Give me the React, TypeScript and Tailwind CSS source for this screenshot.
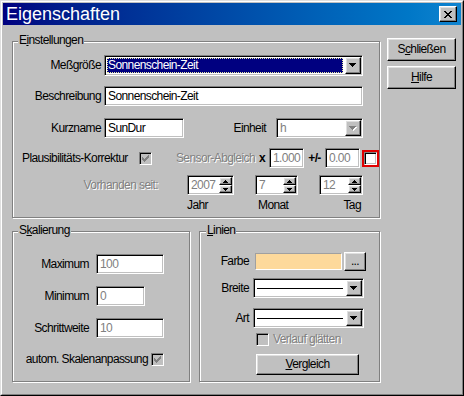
import React from "react";

const FONT = "font-['Liberation_Sans',Arial,sans-serif]";
const SUNKEN =
  "border border-t-[#808080] border-l-[#808080] border-r-white border-b-white shadow-[inset_1px_1px_0_#000,inset_-1px_-1px_0_#c0c0c0]";
const RAISED =
  "bg-[#c0c0c0] border border-t-white border-l-white border-r-black border-b-black shadow-[inset_-1px_-1px_0_#808080,inset_1px_1px_0_#dfdfdf]";
const DIS = "text-[#808080] [text-shadow:1px_1px_0_#fff]";

function DownArrow({ disabled }: { disabled?: boolean }) {
  const c = disabled ? "#808080" : "#000";
  return (
    <svg width="8" height="5" viewBox="0 0 8 5" shapeRendering="crispEdges">
      {disabled && (
        <g fill="#fff">
          <rect x="1" y="1" width="7" height="1" />
          <rect x="2" y="2" width="5" height="1" />
          <rect x="3" y="3" width="3" height="1" />
          <rect x="4" y="4" width="1" height="1" />
        </g>
      )}
      <g fill={c}>
        <rect x="0" y="0" width="7" height="1" />
        <rect x="1" y="1" width="5" height="1" />
        <rect x="2" y="2" width="3" height="1" />
        <rect x="3" y="3" width="1" height="1" />
      </g>
    </svg>
  );
}

function SmallArrow({ up }: { up?: boolean }) {
  return (
    <svg width="5" height="3" viewBox="0 0 5 3" shapeRendering="crispEdges">
      {up ? (
        <g fill="#000">
          <rect x="2" y="0" width="1" height="1" />
          <rect x="1" y="1" width="3" height="1" />
          <rect x="0" y="2" width="5" height="1" />
        </g>
      ) : (
        <g fill="#000">
          <rect x="0" y="0" width="5" height="1" />
          <rect x="1" y="1" width="3" height="1" />
          <rect x="2" y="2" width="1" height="1" />
        </g>
      )}
    </svg>
  );
}

function CheckMark({ color }: { color: string }) {
  const rows: [number, number][][] = [
    [[6, 1]],
    [[5, 2]],
    [[0, 1], [4, 3]],
    [[0, 2], [3, 3]],
    [[0, 5]],
    [[1, 3]],
    [[2, 1]],
  ];
  return (
    <svg width="7" height="7" viewBox="0 0 7 7" shapeRendering="crispEdges">
      {rows.map((r, y) =>
        r.map(([x, w], i) => <rect key={`${y}-${i}`} x={x} y={y} width={w} height={1} fill={color} />)
      )}
    </svg>
  );
}

function Checkbox({ checked, disabled, className = "" }: { checked?: boolean; disabled?: boolean; className?: string }) {
  return (
    <div
      className={`${SUNKEN} w-[13px] h-[13px] shrink-0 flex items-center justify-center ${
        disabled ? "bg-[#c0c0c0]" : "bg-white"
      } ${className}`}
    >
      {checked && <CheckMark color={disabled ? "#808080" : "#000"} />}
    </div>
  );
}

function Field({ className = "", gray, children }: { className?: string; gray?: boolean; children?: React.ReactNode }) {
  return (
    <div
      className={`${SUNKEN} bg-white h-[20px] shrink-0 flex items-center pl-[3px] whitespace-nowrap overflow-hidden ${
        gray ? "text-[#808080]" : ""
      } ${className}`}
    >
      {children}
    </div>
  );
}

function DropButton({ disabled }: { disabled?: boolean }) {
  return (
    <div className={`${RAISED} w-[16px] h-full shrink-0 flex items-center justify-center`}>
      <DownArrow disabled={disabled} />
    </div>
  );
}

function Spinner({ className = "", children }: { className?: string; children?: React.ReactNode }) {
  return (
    <div className={`${SUNKEN} bg-white p-px flex h-[20px] shrink-0 ${className}`}>
      <div className="flex-1 pl-[2px] text-[#808080] flex items-center">{children}</div>
      <div className="flex flex-col w-[13px]">
        <div className={`${RAISED} flex-1 flex items-center justify-center`}>
          <SmallArrow up />
        </div>
        <div className={`${RAISED} flex-1 flex items-center justify-center`}>
          <SmallArrow />
        </div>
      </div>
    </div>
  );
}

function Group({
  title,
  className = "",
  labelClass = "left-[5px]",
  children,
}: {
  title: React.ReactNode;
  className?: string;
  labelClass?: string;
  children?: React.ReactNode;
}) {
  return (
    <div className={`relative border border-[#808080] shadow-[inset_1px_1px_0_#fff,1px_1px_0_#fff] shrink-0 ${className}`}>
      <div className={`absolute -top-[9px] px-px bg-[#c0c0c0] ${labelClass}`}>{title}</div>
      {children}
    </div>
  );
}

function LineCombo({ className = "" }: { className?: string }) {
  return (
    <div className={`${SUNKEN} bg-white p-px flex h-[20px] shrink-0 ${className}`}>
      <div className="flex-1 flex items-center pl-[2px] pr-[3px]">
        <div className="h-px w-full bg-black" />
      </div>
      <DropButton />
    </div>
  );
}

export default function App() {
  return (
    <div
      className={`w-[464px] h-[396px] ${FONT} text-[12px] tracking-[-0.6px] leading-[15px] text-black bg-[#c0c0c0] border border-t-[#dfdfdf] border-l-[#dfdfdf] border-r-black border-b-black`}
    >
      <div className="h-full border border-t-white border-l-white border-r-[#808080] border-b-[#808080] p-px flex flex-col">
        {/* Title bar */}
        <div className="h-[22px] shrink-0 flex items-center bg-linear-to-r from-[#000080] to-[#1084d0] pl-[3px] pr-[4px]">
          <span className="flex-1 text-[18px] tracking-normal leading-none text-white">Eigenschaften</span>
          <div className={`${RAISED} w-[18px] h-[16px] flex items-center justify-center`}>
            <svg width="8" height="7" viewBox="0 0 8 7" shapeRendering="crispEdges">
              <g fill="#000">
                <rect x="0" y="0" width="2" height="1" />
                <rect x="6" y="0" width="2" height="1" />
                <rect x="1" y="1" width="2" height="1" />
                <rect x="5" y="1" width="2" height="1" />
                <rect x="2" y="2" width="4" height="1" />
                <rect x="3" y="3" width="2" height="1" />
                <rect x="2" y="4" width="4" height="1" />
                <rect x="1" y="5" width="2" height="1" />
                <rect x="5" y="5" width="2" height="1" />
                <rect x="0" y="6" width="2" height="1" />
                <rect x="6" y="6" width="2" height="1" />
              </g>
            </svg>
          </div>
        </div>

        {/* Body */}
        <div className="flex">
          <div className="ml-[9px] mt-[16px] w-[368px] flex flex-col">
            <Group
              className="w-[368px] h-[177px]"
              title={
                <>
                  E<u>i</u>nstellungen
                </>
              }
            >
              <div className="pt-[13px] flex flex-col">
                <div className="flex items-center h-[21px]">
                  <div className="w-[88px] text-right">Meßgröße</div>
                  <div className={`${SUNKEN} bg-white p-px flex ml-[3px] w-[259px] h-[21px]`}>
                    <div className="flex-1 m-px mr-[2px] bg-[#000080] text-white border border-dotted border-[#e8e8a0] flex items-center">
                      Sonnenschein-Zeit
                    </div>
                    <DropButton />
                  </div>
                </div>

                <div className="flex items-center h-[20px] mt-[10px]">
                  <div className="w-[88px] text-right">Beschreibung</div>
                  <Field className="ml-[3px] w-[259px]">Sonnenschein-Zeit</Field>
                </div>

                <div className="flex items-center h-[20px] mt-[12px]">
                  <div className="w-[88px] text-right">Kurzname</div>
                  <Field className="ml-[3px] w-[80px]">SunDur</Field>
                  <div className="w-[82px] text-right">Einheit</div>
                  <div className={`${SUNKEN} bg-white p-px flex ml-[10px] w-[87px] h-[20px]`}>
                    <div className="flex-1 pl-[2px] text-[#808080] flex items-center">h</div>
                    <DropButton disabled />
                  </div>
                </div>

                <div className="flex items-center h-[20px] mt-[10px]">
                  <div className="w-[126px] pl-[9px] whitespace-nowrap">Plausibilitäts-Korrektur</div>
                  <Checkbox checked disabled />
                  <div className={`w-[103px] text-right whitespace-nowrap ${DIS}`}>Sensor-Abgleich</div>
                  <div className="w-[14px] text-center font-bold">x</div>
                  <Field className="w-[35px]" gray>
                    1.000
                  </Field>
                  <div className="w-[21px] text-center font-bold">+/-</div>
                  <Field className="w-[35px]" gray>
                    0.00
                  </Field>
                  <div className="ml-[2px] w-[17px] h-[17px] border-2 border-[#e00000] shrink-0">
                    <Checkbox />
                  </div>
                </div>

                <div className="flex items-center h-[20px] mt-[7px]">
                  <div className={`w-[145px] text-right ${DIS}`}>Vorhanden seit:</div>
                  <Spinner className="ml-[29px] w-[47px]">2007</Spinner>
                  <Spinner className="ml-[21px] w-[43px]">7</Spinner>
                  <Spinner className="ml-[21px] w-[44px]">12</Spinner>
                </div>
                <div className="flex mt-[3px]">
                  <div className="ml-[174px] w-[47px]">Jahr</div>
                  <div className="ml-[21px] w-[43px] pl-[3px]">Monat</div>
                  <div className="ml-[21px] w-[44px] text-right pr-[2px]">Tag</div>
                </div>
              </div>
            </Group>

            <div className="flex mt-[13px]">
              <Group
                className="w-[178px] h-[151px]"
                title={
                  <>
                    S<u>k</u>alierung
                  </>
                }
              >
                <div className="pt-[22px] flex flex-col">
                  <div className="flex items-center h-[20px]">
                    <div className="w-[76px] text-right">Maximum</div>
                    <Field className="ml-[7px] w-[68px]" gray>
                      100
                    </Field>
                  </div>
                  <div className="flex items-center h-[20px] mt-[12px]">
                    <div className="w-[76px] text-right">Minimum</div>
                    <Field className="ml-[7px] w-[49px]" gray>
                      0
                    </Field>
                  </div>
                  <div className="flex items-center h-[20px] mt-[12px]">
                    <div className="w-[76px] text-right">Schrittweite</div>
                    <Field className="ml-[7px] w-[68px]" gray>
                      10
                    </Field>
                  </div>
                  <div className="flex items-center h-[15px] mt-[14px]">
                    <div className="w-[135px] text-right whitespace-nowrap">autom. Skalenanpassung</div>
                    <Checkbox checked disabled className="ml-[3px]" />
                  </div>
                </div>
              </Group>

              <Group
                className="ml-[9px] w-[181px] h-[151px]"
                labelClass="left-[6px]"
                title={
                  <>
                    <u>L</u>inien
                  </>
                }
              >
                <div className="pt-[20px] flex flex-col">
                  <div className="flex items-center h-[19px]">
                    <div className="w-[49px] text-right">Farbe</div>
                    <div className="ml-[6px] w-[87px] h-[17px] bg-[#fdd99b] border border-t-[#a0a0a0] border-l-[#a0a0a0] border-r-white border-b-white" />
                    <div className={`${RAISED} ml-[2px] w-[22px] h-[19px] flex items-center justify-center leading-none pb-[2px]`}>
                      ...
                    </div>
                  </div>
                  <div className="flex items-center h-[20px] mt-[7px]">
                    <div className="w-[49px] text-right">Breite</div>
                    <LineCombo className="ml-[4px] w-[111px]" />
                  </div>
                  <div className="flex items-center h-[20px] mt-[10px]">
                    <div className="w-[49px] text-right">Art</div>
                    <LineCombo className="ml-[4px] w-[111px]" />
                  </div>
                  <div className="flex items-center h-[15px] mt-[4px]">
                    <Checkbox disabled className="ml-[56px]" />
                    <div className={`ml-[4px] whitespace-nowrap ${DIS}`}>Verlauf glätten</div>
                  </div>
                  <div className={`${RAISED} mt-[7px] ml-[56px] w-[103px] h-[21px] flex items-center justify-center`}>
                    <span>
                      <u>V</u>ergleich
                    </span>
                  </div>
                </div>
              </Group>
            </div>
          </div>

          <div className="ml-[7px] mt-[13px] flex flex-col gap-[5px]">
            <div className={`${RAISED} w-[69px] h-[23px] flex items-center justify-center`}>
              <span>
                S<u>c</u>hließen
              </span>
            </div>
            <div className={`${RAISED} w-[69px] h-[23px] flex items-center justify-center`}>
              <span>
                <u>H</u>ilfe
              </span>
            </div>
          </div>
        </div>
      </div>
    </div>
  );
}
